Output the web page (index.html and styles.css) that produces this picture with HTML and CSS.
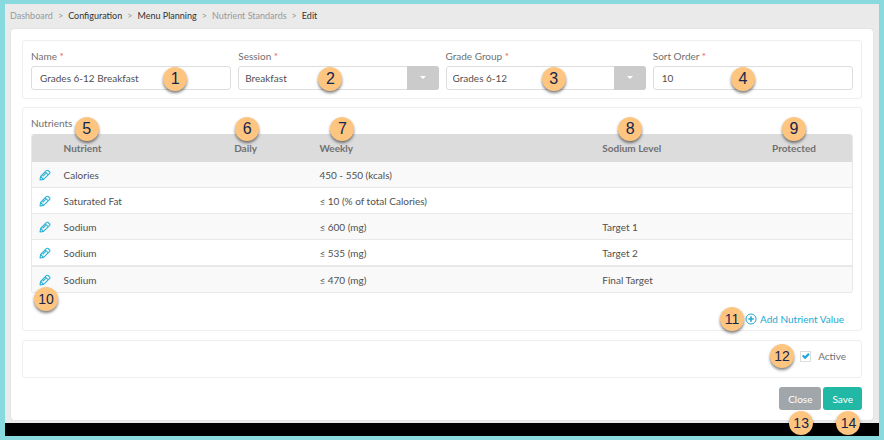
FILE: index.html
```html
<!DOCTYPE html>
<html lang="en">
<head>
  <meta charset="UTF-8">
  <meta name="viewport" content="width=device-width, initial-scale=1.0">
  <title>Nutrient Standards - Edit</title>
  <link rel="stylesheet" href="styles.css">
</head>
<body>
  <svg class="sprite" aria-hidden="true">
    <symbol id="pencil" viewBox="0 0 12 12">
      <path d="M1 11 L1.6 7.5 L7.3 1.7 Q8.2 0.8 9.2 1.5 L10.6 2.9 Q11.3 3.8 10.4 4.7 L4.6 10.4 Z M1.6 7.5 L4.6 10.4 M6.2 2.8 L9.3 5.8 M3.7 7.4 L6.8 4.3" fill="none" stroke="currentColor" stroke-width="1.1" stroke-linejoin="round"/>
    </symbol>
  </svg>

  <nav class="breadcrumb" aria-label="Breadcrumb">
    <span>Dashboard</span>
    <i>&gt;</i>
    <a href="#">Configuration</a>
    <i>&gt;</i>
    <a href="#">Menu Planning</a>
    <i>&gt;</i>
    <span>Nutrient Standards</span>
    <i>&gt;</i>
    <b>Edit</b>
  </nav>

  <main class="card">
    <form class="form">
      <section class="panel fields">
        <div class="field">
          <label for="name">Name <em>*</em></label>
          <div class="control">
            <input type="text" id="name" value="Grades 6-12 Breakfast">
            <span class="badge name-badge">1</span>
          </div>
        </div>
        <div class="field">
          <label for="session">Session <em>*</em></label>
          <div class="control drop">
            <select id="session">
              <option>Breakfast</option>
            </select>
            <span class="badge session-badge">2</span>
          </div>
        </div>
        <div class="field">
          <label for="grade">Grade Group <em>*</em></label>
          <div class="control drop">
            <select id="grade">
              <option>Grades 6-12</option>
            </select>
            <span class="badge grade-badge">3</span>
          </div>
        </div>
        <div class="field">
          <label for="sort">Sort Order <em>*</em></label>
          <div class="control">
            <input type="text" id="sort" value="10">
            <span class="badge sort-badge">4</span>
          </div>
        </div>
      </section>

      <section class="panel nutrients">
        <h2>Nutrients</h2>
        <div class="table-box">
          <table aria-label="Nutrients">
            <colgroup>
              <col class="col-edit">
              <col class="col-nutrient">
              <col class="col-daily">
              <col class="col-weekly">
              <col class="col-level">
              <col class="col-protected">
            </colgroup>
            <thead>
              <tr>
                <th></th>
                <th><span class="head">Nutrient<span class="badge">5</span></span></th>
                <th><span class="head">Daily<span class="badge">6</span></span></th>
                <th><span class="head">Weekly<span class="badge">7</span></span></th>
                <th><span class="head">Sodium Level<span class="badge">8</span></span></th>
                <th><span class="head">Protected<span class="badge">9</span></span></th>
              </tr>
            </thead>
            <tbody>
              <tr>
                <td><button type="button" class="edit" aria-label="Edit"><svg><use href="#pencil"/></svg></button></td>
                <td>Calories</td>
                <td></td>
                <td>450 - 550 (kcals)</td>
                <td></td>
                <td></td>
              </tr>
              <tr>
                <td><button type="button" class="edit" aria-label="Edit"><svg><use href="#pencil"/></svg></button></td>
                <td>Saturated Fat</td>
                <td></td>
                <td>≤ 10 (% of total Calories)</td>
                <td></td>
                <td></td>
              </tr>
              <tr>
                <td><button type="button" class="edit" aria-label="Edit"><svg><use href="#pencil"/></svg></button></td>
                <td>Sodium</td>
                <td></td>
                <td>≤ 600 (mg)</td>
                <td>Target 1</td>
                <td></td>
              </tr>
              <tr>
                <td><button type="button" class="edit" aria-label="Edit"><svg><use href="#pencil"/></svg></button></td>
                <td>Sodium</td>
                <td></td>
                <td>≤ 535 (mg)</td>
                <td>Target 2</td>
                <td></td>
              </tr>
              <tr>
                <td><button type="button" class="edit" aria-label="Edit"><svg><use href="#pencil"/></svg></button></td>
                <td>Sodium</td>
                <td></td>
                <td>≤ 470 (mg)</td>
                <td>Final Target</td>
                <td></td>
              </tr>
            </tbody>
          </table>
          <span class="badge small edit-badge">10</span>
        </div>
        <div class="add-row">
          <a class="add" href="#">
            <svg viewBox="0 0 12 12" aria-hidden="true">
              <circle cx="6" cy="6" r="5" fill="none" stroke="currentColor"/>
              <path d="M6 3.3V8.7M3.3 6H8.7" stroke="currentColor" stroke-width="1.6"/>
            </svg>
            Add Nutrient Value
            <span class="badge small add-badge">11</span>
          </a>
        </div>
      </section>

      <section class="panel status">
        <label class="active">
          <input type="checkbox" checked>
          Active
          <span class="badge small active-badge">12</span>
        </label>
      </section>

      <div class="actions">
        <div class="action">
          <button type="button" class="btn">Close</button>
          <span class="badge small">13</span>
        </div>
        <div class="action">
          <button type="submit" class="btn save">Save</button>
          <span class="badge small save-badge">14</span>
        </div>
      </div>
    </form>
  </main>

  <footer class="footer"></footer>
</body>
</html>
```

FILE: styles.css
```css
* {
  box-sizing: border-box;
}

body {
  display: flex;
  flex-direction: column;
  min-height: 100vh;
  margin: 0;
  border: 4px solid #88dadf;
  border-left-width: 5px;
  border-right-width: 5px;
  background: #eaeaea;
  color: #505050;
  font-family: Lato, "Open Sans", sans-serif;
  font-size: 10px;
  line-height: 14px;
}

input, select, button {
  font: inherit;
  color: inherit;
}

.sprite {
  position: absolute;
  width: 0;
  height: 0;
}

.breadcrumb {
  display: flex;
  gap: 5px;
  padding: 5px 5px 6px;
  color: #999;
  font-size: 9px;
}

.breadcrumb a, .breadcrumb b {
  color: #333;
  font-weight: normal;
  text-decoration: none;
}

.breadcrumb i {
  font-style: normal;
}

.card {
  flex: 1;
  margin: 0 6px 3px;
  padding: 11px 11px 8px;
  background: #fff;
  border-radius: 3px;
  box-shadow: 0 0 1px #bbb;
}

.panel {
  margin-bottom: 9px;
  padding: 8px;
  border: 1px solid #eee;
  border-radius: 3px;
}

/* top fields */
.fields {
  display: grid;
  grid-template-columns: repeat(4, 1fr);
  gap: 7px;
  margin-bottom: 8px;
}

.field label {
  display: block;
  margin-bottom: 3px;
  color: #707070;
}

.field em {
  color: #f05a4a;
  font-style: normal;
}

.control {
  position: relative;
}

.control input, .control select {
  display: block;
  width: 100%;
  height: 24px;
  padding: 0 8px;
  border: 1px solid #ddd;
  border-radius: 3px;
  background: #fff;
  appearance: none;
}

.control select {
  padding: 0 6px;
}

.drop::before {
  content: "";
  position: absolute;
  top: 0;
  right: 0;
  width: 32px;
  height: 24px;
  border-radius: 0 3px 3px 0;
  background: #cbcbcb;
  pointer-events: none;
}

.drop::after {
  content: "";
  position: absolute;
  top: 10px;
  right: 13px;
  border: 3px solid transparent;
  border-top-color: #fff;
  border-bottom: 0;
  pointer-events: none;
}

/* numbered markers */
.badge {
  position: absolute;
  width: 24px;
  height: 24px;
  border-radius: 50%;
  background: #fdc57f;
  box-shadow: 0 2px 3px rgba(0, 0, 0, 0.5);
  color: #14264d;
  font-family: "Liberation Sans", Arial, sans-serif;
  font-size: 16px;
  font-weight: normal;
  line-height: 24px;
  text-align: center;
  pointer-events: none;
}

.badge.small {
  font-size: 14px;
}

.control .badge {
  top: 1px;
}

.name-badge {
  left: 66%;
}

.session-badge {
  left: 40%;
}

.grade-badge {
  left: 48%;
}

.sort-badge {
  left: 39%;
}

/* nutrients table */
.nutrients {
  padding-bottom: 4px;
}

h2 {
  margin: 0 0 4px;
  color: #707070;
  font-size: 10px;
  font-weight: normal;
}

.table-box {
  position: relative;
}

table {
  width: 100%;
  table-layout: fixed;
  border: 1px solid #e8e8e8;
  border-width: 0 1px;
  border-collapse: separate;
  border-spacing: 0;
  border-radius: 3px;
}

.col-edit {
  width: 3%;
}

.col-nutrient {
  width: 20.8%;
}

.col-daily {
  width: 10.4%;
}

.col-weekly {
  width: 34.5%;
}

.col-level {
  width: 20.7%;
}

th, td {
  height: 26px;
  padding: 0 7px;
  text-align: left;
}

th {
  height: 28px;
  background: #dcdcdc;
  color: #707070;
}

th:first-child {
  border-top-left-radius: 3px;
}

th:last-child {
  border-top-right-radius: 3px;
}

td {
  border-bottom: 1px solid #e8e8e8;
}

tbody tr:nth-child(odd) {
  background: #f9f9f9;
}

tbody tr:nth-child(4) td {
  height: 27px;
  border-bottom-width: 2px;
}

.head {
  position: relative;
}

.head .badge {
  bottom: 13px;
}

th:nth-child(3) .badge {
  left: 1px;
}

th:nth-child(2) .badge, th:nth-child(4) .badge {
  left: 11px;
}

th:nth-child(5) .badge {
  left: 16px;
}

th:nth-child(6) .badge {
  left: 10px;
}

.edit {
  display: block;
  padding: 0;
  border: 0;
  background: none;
  color: #2bb2d6;
  cursor: pointer;
}

.edit svg {
  display: block;
  width: 12px;
  height: 12px;
}

.edit-badge {
  left: 3px;
  bottom: -18px;
}

.add-row {
  display: flex;
  justify-content: flex-end;
  padding: 19px 9px 0;
}

.add {
  position: relative;
  display: flex;
  align-items: center;
  gap: 3px;
  color: #22a9d0;
  text-decoration: none;
}

.add svg {
  width: 12px;
  height: 12px;
}

.add-badge {
  right: 100%;
  margin-right: 1px;
}

/* status and actions */
.status {
  display: flex;
  justify-content: flex-end;
  padding: 8px 15px 14px;
}

.active {
  position: relative;
  display: flex;
  align-items: center;
  gap: 7px;
  color: #707070;
}

.active input {
  width: 11px;
  height: 11px;
  margin: 0;
  border: 1px solid #ddd;
  background: #fff;
  appearance: none;
}

.active input:checked::before {
  content: "";
  display: block;
  width: 9px;
  height: 9px;
  background: #1ba7d8;
  clip-path: polygon(8% 50%, 28% 36%, 42% 52%, 78% 16%, 96% 32%, 44% 86%);
}

.active-badge {
  right: 100%;
  margin-right: 6px;
}

.actions {
  display: flex;
  justify-content: flex-end;
  gap: 2px;
}

.action {
  position: relative;
}

.btn {
  display: block;
  height: 23px;
  padding: 0 9px;
  border: 0;
  border-radius: 3px;
  background: #a1a6ab;
  color: #fff;
  cursor: pointer;
}

.save {
  background: #21b9a5;
}

.action .badge {
  top: 24px;
  left: 10px;
}

.action .save-badge {
  left: 13px;
}

.footer {
  height: 13px;
  background: #000;
}
```
